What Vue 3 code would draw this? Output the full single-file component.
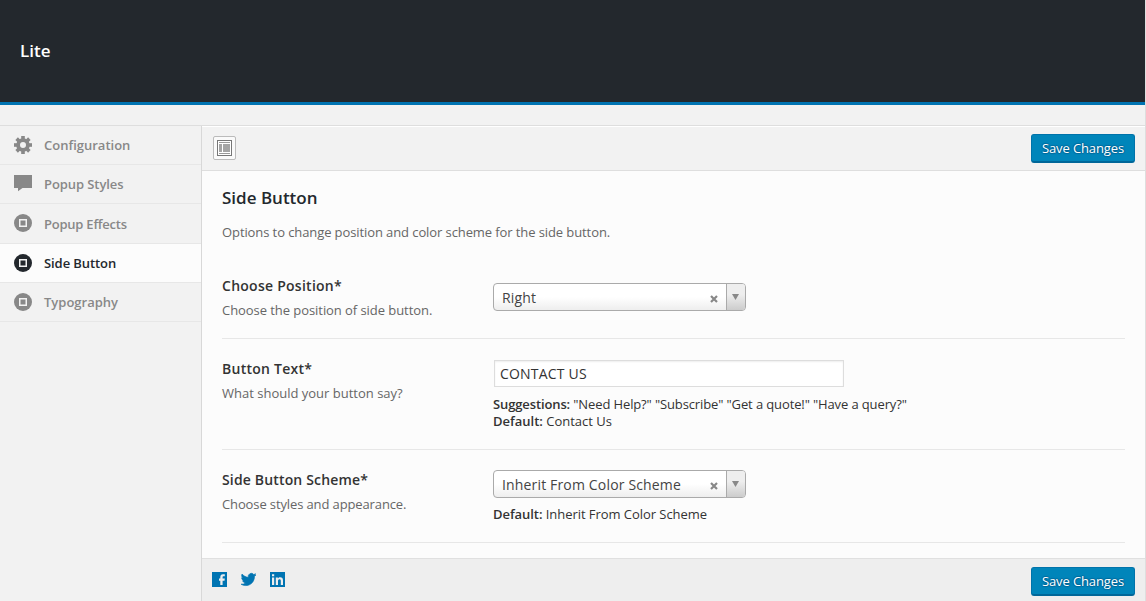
<script setup>
const menu = [
  { label: 'Configuration', icon: 'gear', h: 39 },
  { label: 'Popup Styles', icon: 'comment', h: 39 },
  { label: 'Popup Effects', icon: 'stop', h: 40 },
  { label: 'Side Button', icon: 'stop', h: 39, active: true },
  { label: 'Typography', icon: 'stop', h: 39 },
]
const teeth = [0, 45, 90, 135, 180, 225, 270, 315]
</script>

<template>
  <div class="page">
    <header class="top"><h2>Lite</h2></header>
    <div class="strip"></div>
    <div class="body">
      <nav class="side">
        <a v-for="m in menu" :key="m.label" class="item" :class="{ active: m.active }" :style="{ height: m.h + 'px' }">
          <svg class="ico" width="18" height="18" viewBox="0 0 18 18">
            <template v-if="m.icon === 'gear'">
              <rect v-for="t in teeth" :key="t" x="7.2" y="0" width="3.6" height="5" fill="currentColor" :transform="`rotate(${t} 9 9)`" />
              <circle cx="9" cy="9" r="4.9" fill="none" stroke="currentColor" stroke-width="3.8" />
            </template>
            <path v-else-if="m.icon === 'comment'" d="M0 0h18v13H8.500L4 16.200V13H0z" fill="currentColor" />
            <template v-else>
              <circle cx="9" cy="9" r="9" fill="currentColor" />
              <rect x="5.750" y="5.750" width="6.500" height="6.500" fill="none" class="hole" stroke-width="1.500" />
            </template>
          </svg>
          <span>{{ m.label }}</span>
        </a>
      </nav>
      <main class="main">
        <div class="bar">
          <button class="expand">
            <svg width="15" height="16" viewBox="0 0 15 16">
              <rect x=".5" y=".5" width="14" height="15" fill="#fff" stroke="#777" />
              <path d="M2 2.500h11M2 13.500h11" stroke="#999" />
              <path d="M2 4h3v8H2zM6 4h7v8H6z" fill="#a5a5a5" />
            </svg>
          </button>
          <button class="save">Save Changes</button>
        </div>
        <section class="content">
          <h3>Side Button</h3>
          <p class="desc">Options to change position and color scheme for the side button.</p>
          <div class="row r1">
            <div class="label"><b>Choose Position*</b><span>Choose the position of side button.</span></div>
            <div class="field">
              <div class="select"><span class="val">Right</span>
                <svg class="x" width="8" height="8" viewBox="0 0 8 8"><path d="M1 1l6 6M7 1L1 7" stroke="#888" stroke-width="2.200" /></svg>
                <i class="arrow"><svg width="7" height="6" viewBox="0 0 7 6"><path d="M0 0h7L3.500 6z" fill="#888" /></svg></i>
              </div>
            </div>
          </div>
          <div class="row r2">
            <div class="label"><b>Button Text*</b><span>What should your button say?</span></div>
            <div class="field">
              <div class="input">CONTACT US</div>
              <div class="hint"><span class="tight"><strong>Suggestions:</strong> "Need Help?" "Subscribe" "Get a quote!" "Have a query?"</span><br /><strong>Default:</strong> Contact Us</div>
            </div>
          </div>
          <div class="row r3">
            <div class="label"><b>Side Button Scheme*</b><span>Choose styles and appearance.</span></div>
            <div class="field">
              <div class="select"><span class="val">Inherit From Color Scheme</span>
                <svg class="x" width="8" height="8" viewBox="0 0 8 8"><path d="M1 1l6 6M7 1L1 7" stroke="#888" stroke-width="2.200" /></svg>
                <i class="arrow"><svg width="7" height="6" viewBox="0 0 7 6"><path d="M0 0h7L3.500 6z" fill="#888" /></svg></i>
              </div>
              <div class="hint"><strong>Default:</strong> Inherit From Color Scheme</div>
            </div>
          </div>
        </section>
        <footer class="foot">
          <div class="social">
            <svg width="15" height="15" viewBox="0 0 15 15"><path d="M0 0h15v15H0z" fill="#0074b2" /><path d="M8.300 13V8.700H7V6.600h1.300V5.200C8.300 3.300 9.200 2.300 11 2.300h1.800v2h-1.200c-.8 0-1 .3-1 1v1.300h2.200l-.3 2.100h-1.900V13z" fill="#eee" /></svg>
            <svg width="15" height="15" viewBox="0 0 24 24"><path d="M24 4.600c-.9.4-1.800.7-2.800.8 1-.6 1.800-1.600 2.200-2.700-1 .6-2 1-3.100 1.200A4.900 4.900 0 0 0 11.800 8.400C7.700 8.200 4.100 6.300 1.700 3.200.4 5.400 1 8.300 3.200 9.700c-.8 0-1.600-.2-2.200-.6 0 2.300 1.600 4.400 3.900 4.900-.7.200-1.500.2-2.200.1.600 2 2.400 3.400 4.600 3.400A9.900 9.900 0 0 1 0 19.500 14 14 0 0 0 7.500 21.700c9.100 0 14.300-7.700 14-14.600 1-.7 1.800-1.600 2.500-2.500z" fill="#0074b2" stroke="#0074b2" /></svg>
            <svg width="15" height="15" viewBox="0 0 15 15"><path d="M0 0h15v15H0z" fill="#0074b2" /><path d="M2 5.500h2.200V13H2zM2 2.300h2.200v2H2zM5.800 5.500h2.100v1c.5-.8 1.200-1.200 2.300-1.200 1.900 0 2.800 1.100 2.800 3.200V13h-2.200V8.900c0-1.100-.4-1.700-1.300-1.700-1 0-1.500.7-1.500 1.800v4H5.800z" fill="#eee" /></svg>
          </div>
          <button class="save">Save Changes</button>
        </footer>
      </main>
    </div>
  </div>
</template>

<style>
body { margin: 0; background: #f2f2f2; overflow: hidden; }
</style>
<style scoped>
* { box-sizing: border-box; }
.page { width: 1146px; height: 601px; border-right: 1px solid #dedede; font-family: "Open Sans", sans-serif; font-size: 13px; color: #333; background: #f2f2f2; display: flex; flex-direction: column; overflow: hidden; white-space: nowrap; }
.top { height: 105px; background: #23282d; border-bottom: 3px solid #0074b2; padding: 39px 20px 0; }
.top h2 { margin: 0; color: #fff; font-size: 17px; line-height: 24px; font-weight: 600; }
.strip { height: 21px; border-bottom: 1px solid #dedede; }
.body { display: flex; height: 475px; }
.side { width: 202px; border-right: 1px solid #d8d8d8; }
.item { display: flex; align-items: center; border-bottom: 1px solid #e7e7e7; color: #888; font-weight: 600; padding-left: 14px; }
.item span { margin-left: 12px; letter-spacing: -.08px; }
.item:nth-child(1) span, .item:nth-child(5) span { letter-spacing: 0; }
.item:nth-child(3) span { letter-spacing: -.23px; }
.item:nth-child(3) .ico { margin-top: -2px; }
.item.active { background: #fcfcfc; color: #23282d; }
.hole { stroke: #f2f2f2; }
.main { flex: 1; display: flex; flex-direction: column; background: #fcfcfc; }
.bar { height: 45px; background: #f2f2f2; border-top: 1px solid #fff; border-bottom: 1px solid #dedede; display: flex; justify-content: space-between; padding: 7px 10px 0 11px; }
.expand { width: 23px; height: 24px; margin-top: 2px; padding: 0; background: #fafafa; border: 1px solid #bbb; border-radius: 2px; display: flex; align-items: center; justify-content: center; }
.save { width: 104px; height: 29px; padding: 0; font: 13px/26px "Open Sans", sans-serif; letter-spacing: -.12px; color: #fff; background: #0085ba; border: 1px solid #0073aa; border-bottom: 2px solid #006799; border-radius: 3px; text-shadow: 0 -1px 1px #006799, 1px 0 1px #006799, 0 1px 1px #006799, -1px 0 1px #006799; }
.content { height: 387px; padding: 0 20px; display: flex; flex-direction: column; }
h3 { margin: 14px 0 0; font-size: 17px; line-height: 26px; font-weight: 600; color: #23282d; }
.desc { margin: 11px 0 0; line-height: 20px; color: #666; letter-spacing: -.094px; }
.row { display: flex; border-bottom: 1px solid #e7e7e7; flex: none; }
.r1 { height: 97px; padding-top: 32px; }
.r2 { height: 111px; padding-top: 18px; }
.r3 { height: 93px; padding-top: 18px; }
.label { width: 271px; }
.label b, .label span { display: block; }
.label b { font-size: 14px; font-weight: 600; line-height: 24px; letter-spacing: .26px; }
.r3 .label b { letter-spacing: .16px; }
.label span { margin-top: 2px; line-height: 21px; color: #666; letter-spacing: -.06px; }
.r2 .label span { letter-spacing: 0; }
.r3 .label span { letter-spacing: -.12px; }
.field { margin-top: 2px; }
.r1 .field { margin-top: 9px; }
.select { width: 253px; height: 28px; border: 1px solid #aaa; border-radius: 4px; background: linear-gradient(#fff 50%, #eee); display: flex; align-items: center; padding-left: 8px; overflow: hidden; }
.val { flex: 1; font-size: 14px; color: #444; line-height: 26px; padding-top: 2px; letter-spacing: .16px; }
.x { margin: 3px 8px 0 0; }
.arrow { width: 19px; height: 26px; border-left: 1px solid #aaa; background: linear-gradient(#eee 40%, #ccc); display: flex; align-items: center; justify-content: center; padding-right: 2px; }
.input { width: 350px; height: 27px; margin: 1px 0 0 1px; border: 1px solid #ddd; background: #fff; box-shadow: inset 0 1px 2px rgba(0,0,0,.07); font-size: 14px; line-height: 25px; padding-left: 5px; letter-spacing: .2px; }
.hint { line-height: 17px; margin-top: 9px; }
.r3 .hint { margin-top: 8px; letter-spacing: -.05px; }
.tight { letter-spacing: -.12px; }
.hint strong { font-weight: 600; }
.foot { height: 43px; background: #eee; border-top: 1px solid #e0e0e0; display: flex; justify-content: space-between; padding: 8px 10px 0; }
.social { display: flex; gap: 14px; padding-top: 5px; }
</style>
